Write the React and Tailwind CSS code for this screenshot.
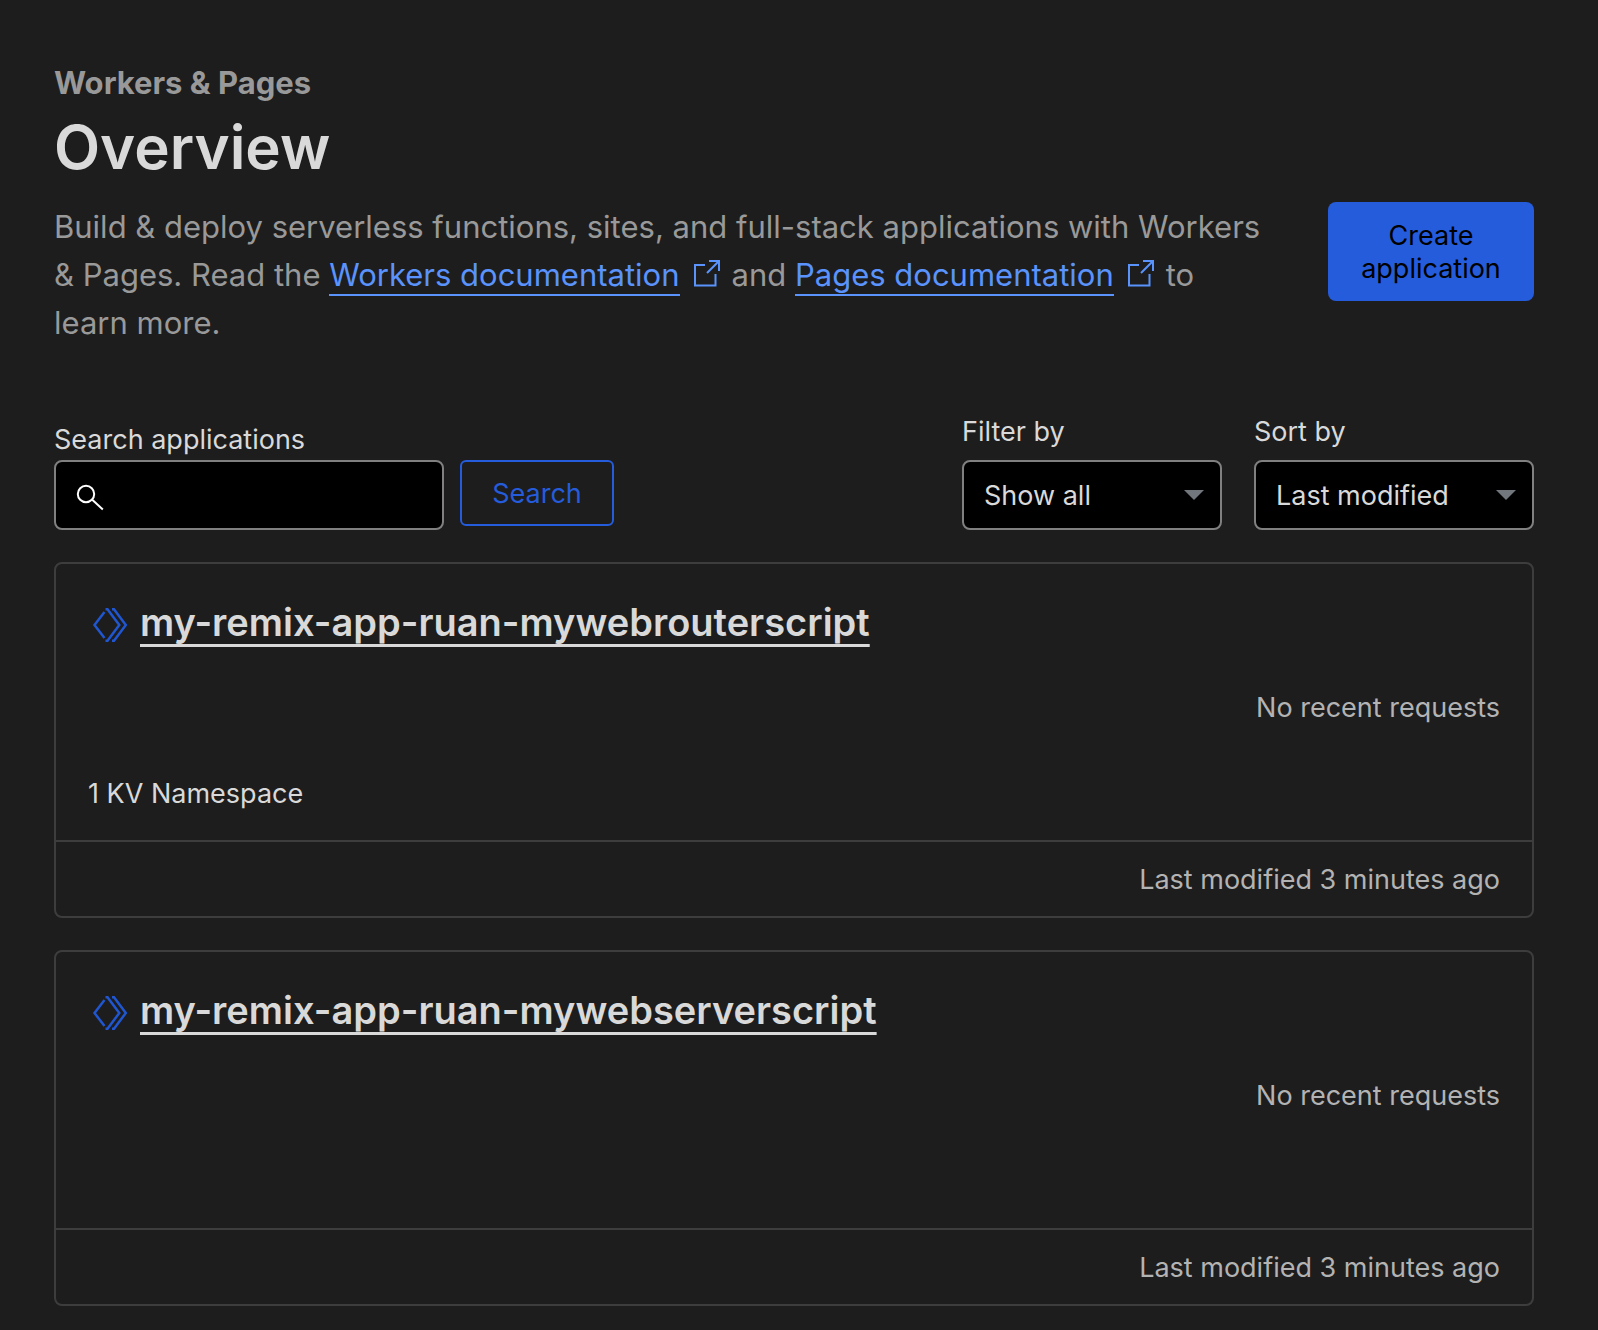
const apps = [
  { name: "my-remix-app-ruan-mywebrouterscript", binding: "1 KV Namespace" },
  { name: "my-remix-app-ruan-mywebserverscript", binding: "" },
];

function ExternalIcon() {
  return (
    <svg
      className="mr-3 ml-3 inline-block h-7 w-7 align-[-1px] text-[#5a93fb]"
      viewBox="0 0 28 28"
      fill="none"
      stroke="currentColor"
      strokeWidth="2"
      aria-hidden="true"
    >
      <path d="M13 6H3v20.500h20.500V15" />
      <path d="M17 2h10v10M26.500 2.500 15 14" />
    </svg>
  );
}

function DocLink({ children }) {
  return (
    <>
      <a href="#" className="border-b-2 border-[#5a93fb] pb-px text-[#5a93fb]">
        {children}
      </a>
      <ExternalIcon />
    </>
  );
}

function SearchIcon() {
  return (
    <svg
      className="pointer-events-none absolute top-6 left-5 h-7 w-7 overflow-visible text-white"
      viewBox="0 0 28 28"
      fill="none"
      stroke="currentColor"
      strokeWidth="2"
      aria-hidden="true"
    >
      <circle cx="12" cy="10" r="8.200" />
      <path d="M18 15.500 28.800 25.500" />
    </svg>
  );
}

function WorkerIcon() {
  return (
    <svg
      className="mt-1.5 h-9 w-9 shrink-0 text-[#2056cf]"
      viewBox="0 0 36 36"
      fill="none"
      stroke="currentColor"
      strokeWidth="2.500"
      aria-hidden="true"
    >
      <path d="M12.500 5 2.500 18 12.500 31" />
      <path d="M13.500 2.200H15.500L27.300 18 15.500 33.800h-2" />
      <path d="M20 2.200h2L33.800 18 22 33.800h-2" />
    </svg>
  );
}

function Dropdown({ id, label, width, options }) {
  return (
    <div className={width}>
      <label htmlFor={id} className="mb-2.5 block leading-9">
        {label}
      </label>
      <div className="relative">
        <select
          id={id}
          className="block h-[70px] w-full appearance-none rounded-lg border-2 border-[#808080] bg-black pt-0.5 pr-12 pl-5 text-[27px] text-[#d9d9d9]"
        >
          {options.map((o) => (
            <option key={o}>{o}</option>
          ))}
        </select>
        <svg
          className="pointer-events-none absolute top-[30px] right-[18px] h-2.5 w-5"
          viewBox="0 0 20 10"
          fill="#72767d"
          aria-hidden="true"
        >
          <path d="M0 0h20L10 10z" />
        </svg>
      </div>
    </div>
  );
}

function AppCard({ name, binding }) {
  return (
    <article className="rounded-lg border-2 border-[#3d3d3d]">
      <div className="px-8 pt-8 pb-5">
        <h2 className="flex items-center gap-3 pl-1 text-[38px] leading-[52px] font-semibold">
          <WorkerIcon />
          <a
            href="#"
            className="underline decoration-[3px] underline-offset-[8px]"
          >
            {name}
          </a>
        </h2>
        <p className="mt-10 text-right leading-10 text-[#b3b3b3]">
          No recent requests
        </p>
        <p className="mt-[46px] h-[46px] leading-10">{binding}</p>
      </div>
      <footer className="border-t-2 border-[#3d3d3d] px-8 pt-[17px] pb-[15px] text-right leading-[42px] text-[#b3b3b3]">
        Last modified 3 minutes ago
      </footer>
    </article>
  );
}

export default function App() {
  return (
    <main
      className="min-h-screen bg-[#1d1d1d] px-[54px] pt-[63px] pr-16 pb-6 text-[27px] text-[#d9d9d9]"
      style={{ fontFamily: 'Inter, "Liberation Sans", sans-serif' }}
    >
      <p className="text-[31px] leading-10 font-bold text-[#999999]">
        Workers &amp; Pages
      </p>
      <h1 className="mt-1 text-[60px] leading-20 font-semibold">Overview</h1>
      <header className="mt-[15px] flex items-start justify-between gap-16">
        <p className="flex-1 pt-px text-[31px] leading-12 text-[#999999]">
          Build &amp; deploy serverless functions, sites, and full-stack
          applications with Workers &amp; Pages. Read the{" "}
          <DocLink>Workers documentation</DocLink>
          and <DocLink>Pages documentation</DocLink>
          to learn more.
        </p>
        <button
          type="button"
          className="w-[206px] rounded-lg bg-[#255cdb] px-4 pt-[17px] pb-4 leading-[33px] text-black"
        >
          Create application
        </button>
      </header>

      <section className="mt-[67px] flex items-end justify-between">
        <form className="flex items-start gap-4">
          <div>
            <label htmlFor="search" className="block leading-10">
              Search applications
            </label>
            <div className="relative">
              <SearchIcon />
              <input
                id="search"
                type="text"
                className="block h-[70px] w-[390px] rounded-lg border-2 border-[#808080] bg-black pr-4 pl-16"
              />
            </div>
          </div>
          <button
            type="button"
            className="mt-10 h-[66px] w-[154px] rounded-md border-2 border-[#255cdb] pt-0.5 text-[#255cdb]"
          >
            Search
          </button>
        </form>
        <div className="flex gap-8">
          <Dropdown
            id="filter"
            label="Filter by"
            width="w-[260px]"
            options={["Show all", "Workers", "Pages"]}
          />
          <Dropdown
            id="sort"
            label="Sort by"
            width="w-[280px]"
            options={["Last modified", "Name"]}
          />
        </div>
      </section>

      <section className="mt-8 flex flex-col gap-8">
        {apps.map((app) => (
          <AppCard key={app.name} {...app} />
        ))}
      </section>
    </main>
  );
}
